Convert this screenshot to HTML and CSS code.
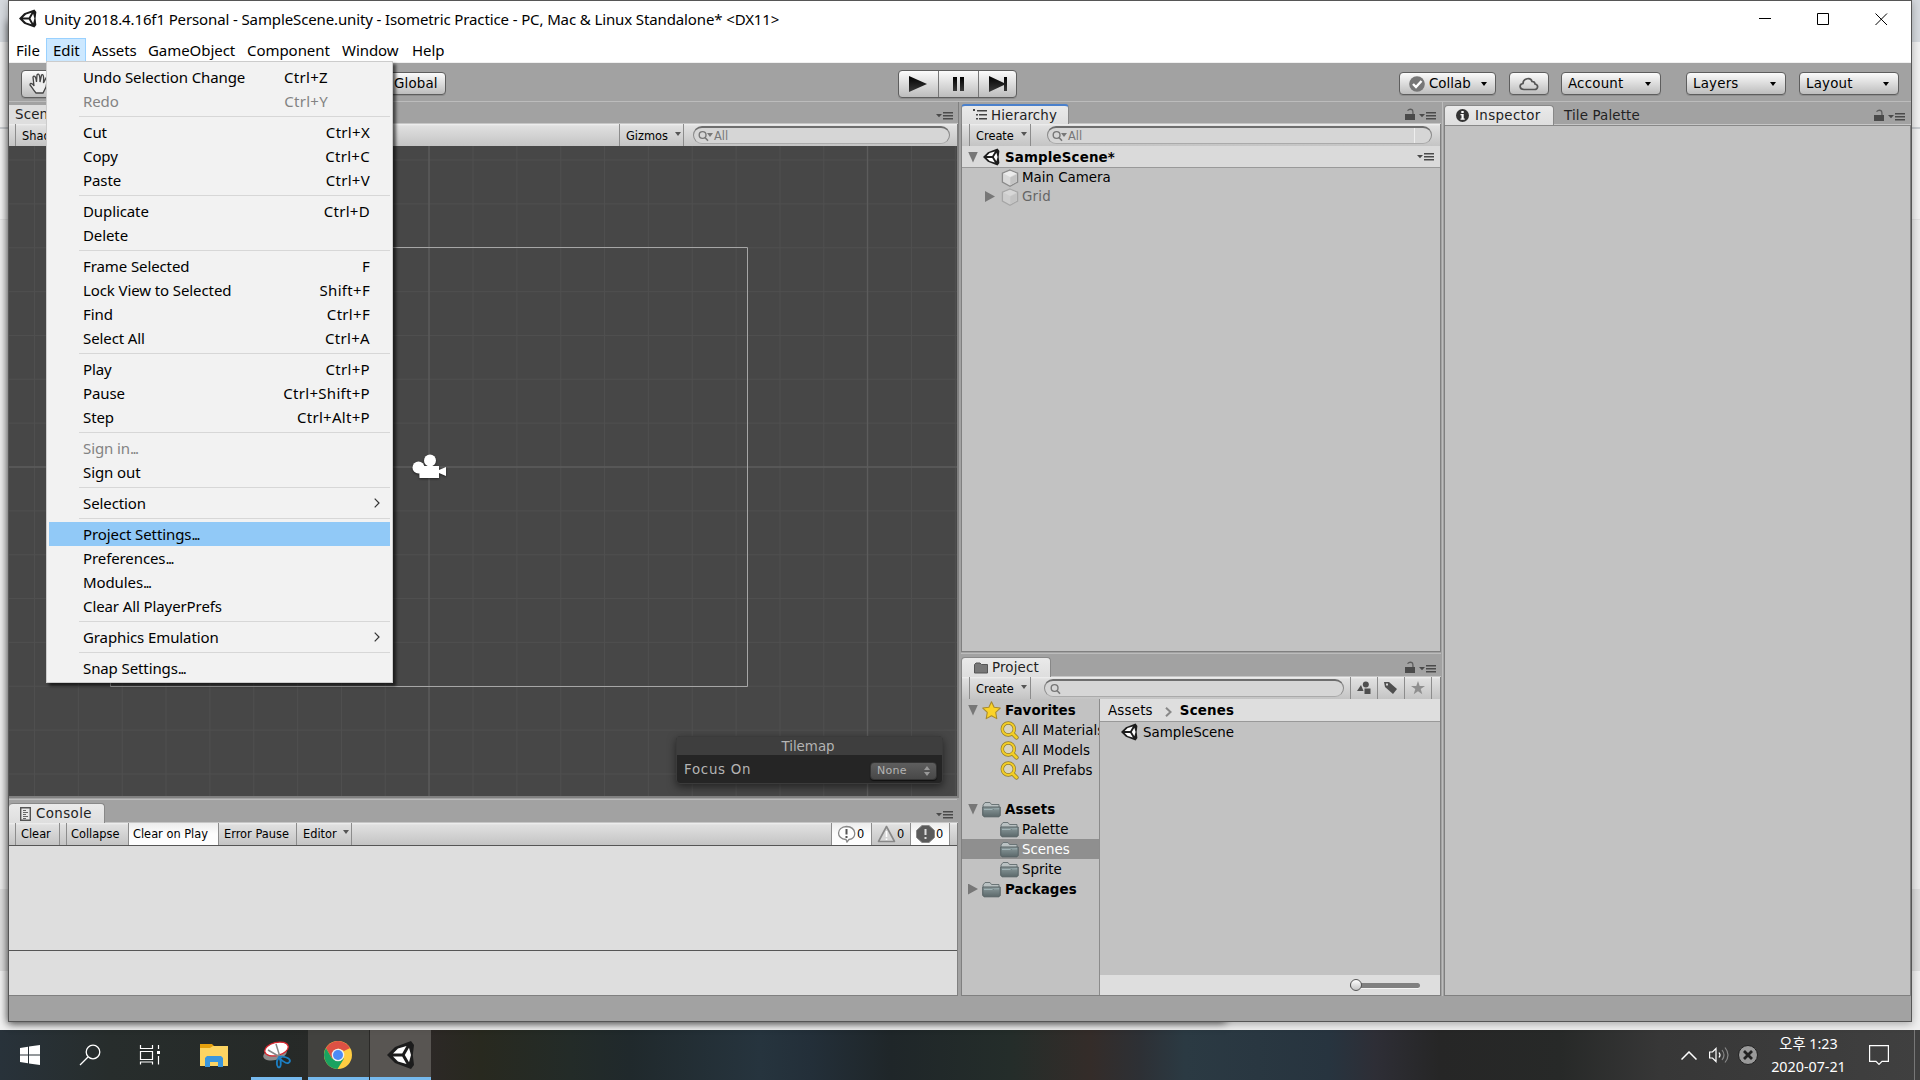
FILE: index.html
```
<!DOCTYPE html>
<html lang="ko">
<head>
	<meta charset="UTF-8">
	<title>Unity 2018.4.16f1 Personal</title>
	<link rel="stylesheet" href="styles.css">
</head>
<body>

	<!-- shared icons -->
	<svg class="defs">
		<symbol id="unity" viewBox="0 0 28 28">
			<path fill="#1c1c1c" d="M0 14 8 6 24 0 27 4 25.8 14 27 24 24 28 8 22Z"/>
			<path fill="#fff" d="M6 12.4 11 7.6 19.5 5 15.2 12.4ZM6 15.6 11 20.4 19.5 23 15.2 15.6ZM22 6.8 24 14 22 21.2 17.8 14Z"/>
		</symbol>
		<symbol id="cube" viewBox="0 0 18 18">
			<path fill="#d9d9d9" stroke="#8b8b8b" stroke-width="1.3" d="M9 1 16.6 4.2V13L9 17.2 1.4 13V4.2Z"/>
			<path fill="#ececec" d="M9 2 15.5 4.6 9 8 2.5 4.6Z"/>
			<path fill="#c4c4c4" d="M9.3 8.4 15.8 5.2V12.6L9.3 16.2Z"/>
		</symbol>
		<symbol id="folder" viewBox="0 0 19 17">
			<path fill="#b9c1c2" stroke="#6b7577" d="M1 14V4L3 1.5H8L9.5 3.5H17V14Z"/>
			<path fill="url(#fg)" stroke="#566264" d="M.8 6H18.2V14.5L17 15.8H2L.8 14.5Z"/>
			<path stroke="#9fb2b5" d="M2 8.5H10L11 7.8H17"/>
		</symbol>
		<symbol id="find" viewBox="0 0 19 19">
			<path stroke="#8e7a2a" stroke-width="4.2" stroke-linecap="round" d="M12.5 12.5 16.5 16.5"/>
			<circle cx="8.3" cy="8" r="6" fill="#d8d4c0" stroke="#8e7a2a" stroke-width="3.4"/>
			<circle cx="8.3" cy="8" r="6" fill="none" stroke="#f2cd27" stroke-width="2.1"/>
			<path stroke="#f2cd27" stroke-width="2.8" stroke-linecap="round" d="M12.5 12.5 16.5 16.5"/>
		</symbol>
		<symbol id="lens" viewBox="0 0 14 12">
			<circle cx="4.6" cy="5" r="3.4" fill="none" stroke="#777" stroke-width="1.4"/>
			<path stroke="#777" stroke-width="1.6" d="M7 7.5 10 10.8"/>
		</symbol>
		<symbol id="lock" viewBox="0 0 10 12">
			<path fill="#4a4a4a" d="M0 6H10V12H0Z"/>
			<path fill="none" stroke="#5c5c5c" stroke-width="1.3" d="M2.5 2.6Q5 .2 7.5 2 8 3 8 6"/>
		</symbol>
		<symbol id="opts" viewBox="0 0 17 8">
			<path fill="#4a4a4a" d="M0 2H6L3 5.2ZM7 0H17V1.4H7ZM7 3H17V4.4H7ZM7 6H17V7.4H7Z"/>
		</symbol>
		<linearGradient id="fg" x1="0" y1="0" x2="0" y2="1">
			<stop offset="0" stop-color="#8b9a9c"/><stop offset="1" stop-color="#5b686a"/>
		</linearGradient>
		<linearGradient id="ink" x1="0" y1="0" x2="0" y2="1">
			<stop offset="0" stop-color="#000"/><stop offset="1" stop-color="#3a3a3a"/>
		</linearGradient>
	</svg>

	<div class="desktop">
		<div class="behind"></div>
		<div class="window">

			<div class="titlebar">
				<svg class="title-icon"><use href="#unity"/></svg>
				<span class="title">Unity 2018.4.16f1 Personal - SampleScene.unity - Isometric Practice - PC, Mac &amp; Linux Standalone* &lt;DX11&gt;</span>
				<svg class="controls" viewBox="0 0 130 14" fill="none" stroke="#000">
					<path d="M0 6.5H12M58.500 1.500H69.500V12.500H58.500ZM116.500 1.500 128 13M128 1.500 116.500 13"/>
				</svg>
			</div>

			<div class="menubar">
				<span class="m-file">File</span><span class="open">Edit</span><span class="m-assets">Assets</span><span class="m-go">GameObject</span><span class="m-comp">Component</span><span class="m-win">Window</span><span>Help</span>
				<div class="menu">
					<div class="item">Undo Selection Change<kbd class="tight">Ctrl+Z</kbd></div>
					<div class="item off">Redo<kbd class="tight">Ctrl+Y</kbd></div>
					<hr>
					<div class="item">Cut<kbd>Ctrl+X</kbd></div>
					<div class="item">Copy<kbd>Ctrl+C</kbd></div>
					<div class="item">Paste<kbd>Ctrl+V</kbd></div>
					<hr>
					<div class="item">Duplicate<kbd>Ctrl+D</kbd></div>
					<div class="item">Delete</div>
					<hr>
					<div class="item">Frame Selected<kbd>F</kbd></div>
					<div class="item">Lock View to Selected<kbd>Shift+F</kbd></div>
					<div class="item">Find<kbd>Ctrl+F</kbd></div>
					<div class="item">Select All<kbd>Ctrl+A</kbd></div>
					<hr>
					<div class="item">Play<kbd>Ctrl+P</kbd></div>
					<div class="item">Pause<kbd>Ctrl+Shift+P</kbd></div>
					<div class="item">Step<kbd>Ctrl+Alt+P</kbd></div>
					<hr>
					<div class="item off"><span>Sign in<span class="dots">...</span></span></div>
					<div class="item">Sign out</div>
					<hr>
					<div class="item">Selection<svg class="sub" viewBox="0 0 6 10"><path d="M.7.7 5 5 .7 9.300"/></svg></div>
					<hr>
					<div class="item hot"><span>Project Settings<span class="dots">...</span></span></div>
					<div class="item"><span>Preferences<span class="dots">...</span></span></div>
					<div class="item"><span>Modules<span class="dots">...</span></span></div>
					<div class="item">Clear All PlayerPrefs</div>
					<hr>
					<div class="item">Graphics Emulation<svg class="sub" viewBox="0 0 6 10"><path d="M.7.7 5 5 .7 9.300"/></svg></div>
					<hr>
					<div class="item"><span>Snap Settings<span class="dots">...</span></span></div>
				</div>
			</div>

			<div class="toolbar">
				<div class="tools btn">
					<svg viewBox="0 0 20 22" fill="#eee" stroke="#444" stroke-width="1.300"><path d="M7 20C4 17 3 14 1 12 1 9 4 11 5 13L4 4C5 2 7 3 7.500 9L8 2C9.500 0 11 1 11 9L12.500 2C14 1 15 2 14.500 10L17 5C19 5 18 8 17 14L14 20Z"/></svg>
				</div>
				<div class="global btn">Global</div>
				<div class="play btn">
					<svg viewBox="0 0 39 26"><path fill="url(#ink)" d="M10 5 28 13 10 21Z"/></svg>
					<svg viewBox="0 0 39 26"><path fill="url(#ink)" d="M14 6H18V20H14ZM21 6H25V20H21Z"/></svg>
					<svg viewBox="0 0 39 26"><path fill="url(#ink)" d="M10 5 25 12V6H28V20H25V14L10 21Z"/></svg>
				</div>
				<div class="collab btn">
					<svg viewBox="0 0 16 16"><circle cx="8" cy="8" r="7.800" fill="#777"/><path fill="none" stroke="#fff" stroke-width="2.400" d="M4 8 7 11 12.500 5"/></svg>
					Collab<i></i>
				</div>
				<div class="cloud btn">
					<svg viewBox="0 0 20 14"><path fill="none" stroke="#555" stroke-width="1.700" d="M5 12.500C0 12.500 0 7 4 6.500 4 1 12 0 13 4.500 15 4.500 16 5.500 16 7 20 8 19 12.500 15.500 12.500Z"/></svg>
				</div>
				<div class="account btn">Account<i></i></div>
				<div class="layers btn">Layers<i></i></div>
				<div class="layout btn">Layout<i></i></div>
			</div>

			<div class="dock">
				<div class="col left">
					<div class="panel scene">
						<div class="tabs"><div class="tab scene-tab">Scene</div><svg class="opts"><use href="#opts"/></svg></div>
						<div class="strip">
							<span class="cell shaded">Shaded</span>
							<span class="cell gizmos">Gizmos<i></i></span>
							<div class="search"><svg><use href="#lens"/></svg><i></i>All</div>
						</div>
						<svg class="view" viewBox="9 146 948 650">
							<defs>
								<pattern id="grid" x="34" y="28" width="43.850" height="43.850" patternUnits="userSpaceOnUse">
									<path fill="none" stroke="#4f4f4f" d="M.5 0V43.850M0 .6H43.850"/>
								</pattern>
							</defs>
							<rect x="9" y="146" width="948" height="650" fill="url(#grid)"/>
							<path stroke="#5c5c5c" stroke-width="1.300" d="M429 146V796M867.500 146V796M9 467H957"/>
							<path fill="none" stroke="#a6a6a6" d="M110.500 247.500H747.500V686.500H110.500Z"/>
							<g class="cam" fill="#fff">
								<circle cx="418.500" cy="467.500" r="6"/><circle cx="430" cy="460.500" r="6"/>
								<path d="M419 466H439V470L446 467V476L439 473V478H419.500Z"/>
							</g>
						</svg>
						<div class="tilemap">
							<div class="tm-title">Tilemap</div>
							<div class="tm-body">Focus On<div class="tm-pop">None<svg viewBox="0 0 6 10"><path fill="#999" d="M0 4 3 0 6 4ZM0 6 3 10 6 6Z"/></svg></div></div>
						</div>
					</div>
					<div class="panel console">
						<div class="tabs">
							<div class="tab on console-tab"><svg viewBox="0 0 11 14"><path fill="#e8e8e8" stroke="#555" stroke-width="1.400" d="M.7.7H10.300V13.300H.7Z"/><path stroke="#666" d="M3 3.500H6M3 5.500H8M3 7.500H6M3 9.500H8M3 11.500H6"/></svg>Console</div>
							<svg class="opts"><use href="#opts"/></svg>
						</div>
						<div class="strip">
							<span class="cell clear">Clear</span><span class="cell collapse">Collapse</span><span class="cell cop on">Clear on Play</span><span class="cell ep">Error Pause</span><span class="cell editor">Editor<i></i></span>
							<span class="cell count on first"><svg viewBox="0 0 19 18"><path fill="#fff" stroke="#888" stroke-width="1.300" d="M9.500 1.500C20 2 20 14 12 14.500L10 17 9 14.500C-1 14-1 2 9.500 1.500Z"/><path stroke="#555" stroke-width="2" d="M9.500 4V9.500M9.500 11V13"/></svg>0</span>
							<span class="cell count warn"><svg viewBox="0 0 19 18"><path fill="#d6d6d6" stroke="#888" stroke-width="1.600" stroke-linejoin="round" d="M9.500 1.500 17.500 16.500H1.500Z"/><path stroke="#fff" stroke-width="1.600" d="M9.500 6V12M9.500 13.500V15"/></svg>0</span>
							<span class="cell count on"><svg viewBox="0 0 19 18"><path fill="#5a5a5a" stroke="#888" d="M6 .5H13L18.500 5.500V12.500L13 17.500H6L.5 12.500V5.500Z"/><path stroke="#ddd" stroke-width="2" d="M9.500 4V10M9.500 12V14"/></svg>0</span>
							<span class="cell end"></span>
						</div>
						<div class="log"></div>
						<div class="detail"></div>
					</div>
				</div>

				<div class="col mid">
					<div class="panel hierarchy">
						<div class="tabs">
							<div class="tab on focus"><svg viewBox="0 0 14 12"><path fill="#444" d="M0 0H2V2H0ZM4 1H14V2.500H4ZM3 5H5V6.500H3ZM6 5H14V6.500H6ZM3 9H5V10.500H3ZM6 9H14V10.500H6Z"/></svg>Hierarchy</div>
							<svg class="lock"><use href="#lock"/></svg><svg class="opts"><use href="#opts"/></svg>
						</div>
						<div class="strip">
							<span class="cell create">Create<i></i></span>
							<div class="search split"><svg><use href="#lens"/></svg><i></i>All</div>
						</div>
						<div class="scene-row"><b class="fold down"></b><svg class="u"><use href="#unity"/></svg><b>SampleScene*</b><svg class="opts"><use href="#opts"/></svg></div>
						<div class="row go"><svg class="cube"><use href="#cube"/></svg>Main Camera</div>
						<div class="row go dim"><b class="fold"></b><svg class="cube"><use href="#cube"/></svg>Grid</div>
					</div>
					<div class="panel project">
						<div class="tabs">
							<div class="tab on project-tab"><svg viewBox="0 0 14 12"><path fill="#777" stroke="#555" d="M.5 11V2.500L2 1H6L7.500 2.500H13.500V11Z"/></svg>Project</div>
							<svg class="lock"><use href="#lock"/></svg><svg class="opts"><use href="#opts"/></svg>
						</div>
						<div class="strip">
							<span class="cell create">Create<i></i></span>
							<div class="search"><svg><use href="#lens"/></svg></div>
							<span class="cell ico"><svg viewBox="0 0 14 14"><path fill="#4f4f4f" d="M0 10 4 4 6.500 10ZM7.500 7.500H13.500V13H7.500Z"/><circle cx="8.800" cy="3.500" r="3" fill="#4f4f4f"/></svg></span>
							<span class="cell ico"><svg viewBox="0 0 14 14"><path fill="#4f4f4f" fill-rule="evenodd" d="M0 1H5L13 8 9 13 1 6ZM2 2.500V4.500H4V2.500Z"/></svg></span>
							<span class="cell ico"><svg viewBox="0 0 14 14"><path fill="#8f8f8f" d="M7 0 8.700 4.900H14L9.700 8 11.300 13.200 7 10.200 2.700 13.200 4.300 8 0 4.900H5.300Z"/></svg></span>
							<span class="cell end"></span>
						</div>
						<div class="split-view">
							<div class="tree">
								<div class="row root"><b class="fold down"></b><svg class="star" viewBox="0 0 18 18"><path fill="#fbd327" stroke="#a88a2c" stroke-linejoin="round" d="M9 .8 11.500 6 17.300 6.700 13 10.800 14 16.700 9 14 4 16.700 5 10.800 .7 6.700 6.500 6Z"/></svg><b>Favorites</b></div>
								<div class="row leaf"><svg class="find"><use href="#find"/></svg>All Materials</div>
								<div class="row leaf"><svg class="find"><use href="#find"/></svg>All Models</div>
								<div class="row leaf"><svg class="find"><use href="#find"/></svg>All Prefabs</div>
								<div class="row gap"></div>
								<div class="row root"><b class="fold down"></b><svg><use href="#folder"/></svg><b>Assets</b></div>
								<div class="row leaf"><svg><use href="#folder"/></svg>Palette</div>
								<div class="row leaf sel"><svg><use href="#folder"/></svg>Scenes</div>
								<div class="row leaf"><svg><use href="#folder"/></svg>Sprite</div>
								<div class="row root"><b class="fold"></b><svg><use href="#folder"/></svg><b>Packages</b></div>
							</div>
							<div class="files">
								<div class="crumbs">Assets<svg viewBox="0 0 7 10"><path fill="none" stroke="#888" stroke-width="2" d="M1 .8 5.500 5 1 9.200"/></svg><b>Scenes</b></div>
								<div class="file"><svg class="u"><use href="#unity"/></svg>SampleScene</div>
								<div class="zoombar"><div class="track"><div class="knob"></div></div></div>
							</div>
						</div>
					</div>
				</div>

				<div class="col right">
					<div class="panel inspector">
						<div class="tabs">
							<div class="tab on insp-tab"><svg viewBox="0 0 13 13"><circle cx="6.500" cy="6.500" r="6.500" fill="#333"/><path fill="#fff" d="M5.300 2H7.700V4H5.300ZM4.500 5H7.700V9.500H8.700V10.800H4.500V9.500H5.500V6.200H4.500Z"/></svg>Inspector</div>
							<div class="tab palette-tab">Tile Palette</div>
							<svg class="lock"><use href="#lock"/></svg><svg class="opts"><use href="#opts"/></svg>
						</div>
						<div class="empty"></div>
					</div>
				</div>
			</div>
		</div>
	</div>

	<div class="taskbar">
		<div class="task"><svg viewBox="0 0 28 28"><path fill="#fff" d="M4 7 12 5.800V13.500H4ZM13 5.600 24 4V13.500H13ZM4 14.500H12V22.200L4 21ZM13 14.500H24V24L13 22.400Z"/></svg></div>
		<div class="task"><svg viewBox="0 0 28 28" fill="none" stroke="#fff" stroke-width="1.300"><circle cx="17" cy="11" r="6.800"/><path d="M12 16 4 24"/></svg></div>
		<div class="task"><svg viewBox="0 0 28 28" fill="none" stroke="#fff" stroke-width="1.200"><path d="M4.500 4V7.500H16.500V4M4.500 10.500H16.500V18.500H4.500ZM4.500 23.500V21H16.500V23.500M22.500 4V8M22.500 15V23.500"/><path fill="#fff" stroke="none" d="M21 10H24V13H21Z"/></svg></div>
		<div class="task"><svg viewBox="0 0 28 28"><path fill="#e5a00d" d="M0 3H12L14 5V9H0Z"/><path fill="#fcd462" d="M0 7H10L13 5H28V25H0Z"/><path fill="#3a96dd" d="M5 26V17L7 15H21L23 17V26H18V21H10V26Z"/></svg></div>
		<div class="task run"><svg viewBox="0 0 28 28"><ellipse cx="12" cy="13" rx="12" ry="6" fill="#8d8d8d" transform="rotate(-14 12 13)"/><ellipse cx="13.500" cy="8" rx="12" ry="6.500" fill="#fff" stroke="#d9272e" stroke-width="1.300" transform="rotate(-14 13.500 8)"/><path stroke="#888" stroke-width="1.500" d="M13 3 17 16M5 9 17 16"/><path fill="none" stroke="#1c7fc4" stroke-width="1.800" d="M16 16C14 19 13 23 15 26 18 28 19 21 16 16 20 22 26 24 27 20 27 17 21 15 16 16Z"/></svg></div>
		<div class="task run chrome"><svg viewBox="0 0 28 28"><circle cx="14" cy="14" r="14" fill="#ffcd42"/><path fill="#dd5144" d="M1.900 7A14 14 0 0 1 26.100 7L14 7.500 8 17.500Z"/><path fill="#1aa260" d="M1.900 7A14 14 0 0 0 13.500 28L20 17.500 8 17.500Z"/><path fill="#dd5144" d="M14 7H26.100L20 10Z"/><circle cx="14" cy="14" r="6.300" fill="#f1f1f1"/><circle cx="14" cy="14" r="5" fill="#4c8bf5"/></svg></div>
		<div class="task run active"><svg viewBox="0 0 28 28"><use href="#unity"/></svg></div>
		<div class="tray">
			<svg class="chev" viewBox="0 0 16 9" fill="none" stroke="#fff" stroke-width="1.500"><path d="M.5 8.500 8 1 15.500 8.500"/></svg>
			<svg class="spk" viewBox="0 0 21 18" fill="none" stroke="#fff" stroke-width="1.200"><path d="M.6 6H3.500L7 2.500V15.500L3.500 12H.6ZM10 6.500Q12 9 10 11.500"/><path stroke="#888" d="M13 4Q17 9 13 14M16 1.500Q22 9 16 16.500"/></svg>
			<svg class="x" viewBox="0 0 20 20"><circle cx="10" cy="10" r="9.500" fill="#9a9a9a" stroke="#222"/><path stroke="#222" stroke-width="2.800" d="M6 6 14 14M14 6 6 14"/></svg>
			<div class="clock"><span>오후 1:23</span><span>2020-07-21</span></div>
			<svg class="note" viewBox="0 0 20 20" fill="none" stroke="#fff" stroke-width="1.200"><path d="M.6.6H19.400V16.400H13L10 19.400 7 16.400H.6Z"/></svg>
		</div>
	</div>

</body>
</html>
```
FILE: styles.css
```
* { box-sizing: border-box; }
body {
	margin: 0;
	width: 1920px;
	height: 1080px;
	overflow: hidden;
	font-family: "DejaVu Sans", sans-serif;
	font-size: 13.4px;
	color: #000;
}
svg { display: block; flex: none; }
.defs { position: absolute; width: 0; height: 0; }

.desktop {
	position: relative;
	height: 1030px;
	padding: 0 8px;
	background: linear-gradient(#d5d9de 42px, #f1f1f1 42px, #f1f1f1 127px, #c9ccd0 127px, #c9ccd0 129px, #f1f1f1 129px, #f1f1f1 219px, #d8d8d8 219px, #ebebeb 220px, #ebebeb 889px, #dcdcdc 889px, #dcdcdc 971px, #f0f0f0 971px);
}
/* second window whose shadow shows under the editor */
.behind {
	position: absolute;
	left: 8px;
	top: 20px;
	width: 1218px;
	height: 1002px;
	box-shadow: 0 1px 8px rgba(0,0,0,.6);
}
.window {
	position: relative;
	display: flex;
	flex-direction: column;
	width: 1904px;
	height: 1022px;
	border: 1px solid #565656;
	background: #a2a2a2;
	box-shadow: 0 2px 8px rgba(0,0,0,.3);
}

.titlebar {
	display: flex;
	align-items: center;
	height: 37px;
	padding: 0 22px 2px 10px;
	background: #fff;
}
.title-icon { width: 18px; height: 19px; }
.title, .menubar {
	font-family: "Noto Sans", "Noto Sans CJK KR", sans-serif;
	font-size: 15px;
}
.title { flex: 1; margin-left: 7px; white-space: pre; letter-spacing: -.12px; }
.controls { width: 130px; height: 14px; }

.menubar {
	position: relative;
	display: flex;
	height: 25px;
	background: #fff;
	border-bottom: 1px solid #f0f0f0;
	line-height: 25px;
	letter-spacing: -.05px;
}
.menubar > span { width: 69px; padding-left: 7px; }
.menubar > .m-file { width: 37px; }
.menubar > .open {
	width: 40px;
	padding-left: 6px;
	background: #cce8ff;
	border: 1px solid #99d1ff;
	line-height: 22px;
}
.menubar > .m-assets { width: 55px; padding-left: 6px; }
.menubar > .m-go { width: 99px; }
.menubar > .m-comp { width: 96px; }
.menubar > .m-win { padding-left: 6px; }

.menu {
	position: absolute;
	z-index: 5;
	left: 37px;
	top: 23px;
	width: 347px;
	padding: 3px 2px 2px;
	background: #f2f2f2;
	border: 1px solid #ccc;
	box-shadow: 3px 3px 3px rgba(0,0,0,.6);
}
.item {
	display: flex;
	align-items: center;
	justify-content: space-between;
	height: 24px;
	padding: 0 20px 0 34px;
	line-height: 24px;
	letter-spacing: -.1px;
}
.item kbd { font: inherit; letter-spacing: .3px; }
.item kbd.tight { margin-right: 42px; }
.dots { letter-spacing: -1.5px; }
.off { color: #838383; }
.hot { background: #91c9f7; }
.menu hr {
	height: 1px;
	margin: 3px 0 3px 30px;
	border: 0;
	background: #d7d7d7;
}
.sub { width: 6px; height: 10px; margin-right: -10px; fill: none; stroke: #333; stroke-width: 1.2; }

.toolbar {
	display: flex;
	align-items: center;
	height: 39px;
	padding: 3px 12px 0;
	border-bottom: 1px solid #bcbcbc;
	line-height: 20px;
}
.btn {
	display: flex;
	align-items: center;
	height: 23px;
	padding: 0 6px;
	border: 1px solid #5e5e5e;
	border-radius: 4px;
	background: linear-gradient(#fbfbfb, #bdbdbd);
	box-shadow: 0 1px 0 rgba(0,0,0,.12);
}
.btn i {
	margin-left: auto;
	margin-right: 3px;
	border: 3.5px solid transparent;
	border-top: 4px solid #000;
	border-bottom: 0;
}
.tools { width: 160px; height: 28px; padding-left: 7px; }
.tools svg { width: 20px; height: 22px; }
.global { width: 66px; margin-left: 199px; padding-left: 13px; letter-spacing: .15px; }
.play { width: 119px; height: 28px; margin-left: 452px; padding: 0; }
.play svg { width: 39px; height: 26px; }
.play svg + svg { width: 40px; border-left: 1px solid #777; }
.collab { width: 97px; margin-left: 382px; padding-left: 9px; padding-right: 5px; }
.collab svg { width: 16px; height: 16px; margin-right: 4px; }
.cloud { width: 40px; margin-left: 13px; padding-left: 9px; }
.cloud svg { width: 20px; height: 14px; }
.account { width: 100px; margin-left: 12px; letter-spacing: .2px; }
.layers { width: 100px; margin-left: 25px; letter-spacing: .2px; }
.layout { width: 100px; margin-left: 13px; letter-spacing: .2px; }

.dock { display: flex; height: 894px; }
.col { display: flex; flex-direction: column; }
.left { width: 951px; }
.mid { width: 482px; padding: 0 1px 0 1px; }
.right { flex: 1; padding: 0 0 0 1px; border-left: 1px solid #bcbcbc; }
.panel {
	display: flex;
	flex-direction: column;
	border: 0 solid #808080;
	border-width: 0 1px 1px;
	background: #c2c2c2;
}
.tabs {
	display: flex;
	align-items: flex-end;
	height: 22px;
	padding-right: 5px;
	background: #a2a2a2;
	border-bottom: 1px solid #c6c6c6;
	margin-left: -1px;
	margin-right: -1px;
}
.tab {
	display: flex;
	align-items: center;
	height: 19px;
	margin-bottom: -1px;
	line-height: 19px;
	letter-spacing: .15px;
	color: #222;
}
.tab.on {
	height: 20px;
	border: 1px solid #888;
	border-bottom: 0;
	border-radius: 4px 4px 0 0;
	background: linear-gradient(#eaeaea, #dedede);
}
.tab.focus { border-top: 2px solid #4a80cc; }
.opts { width: 17px; height: 8px; }
.tabs .opts { margin-bottom: 3px; }
.tabs > .lock { width: 10px; height: 12px; margin: 0 4px 3px auto; }
.strip {
	display: flex;
	align-items: stretch;
	height: 22px;
	padding-left: 6px;
	background: linear-gradient(#f0f0f0 0, #e0e0e0 2px, #c4c4c4);
	font-size: 11.4px;
	line-height: 22px;
}
.cell { display: flex; align-items: center; padding-top: 1px; padding-left: 6px; border-left: 1px solid #8c8c8c; }
.cell i {
	margin: -4px 0 0 7px;
	border: 3px solid transparent;
	border-top: 4px solid #555;
	border-bottom: 0;
}
.cell.on { background: linear-gradient(#ececec, #fdfdfd 50%); }
.search {
	display: flex;
	align-items: center;
	height: 18px;
	margin-top: 2px;
	padding-left: 4px;
	border: 1px solid #8a8a8a;
	border-top: 2px solid #6e6e6e;
	border-bottom-color: #aaa;
	border-radius: 9px;
	background: #d6d6d6;
	color: #777;
	line-height: 14px;
}
.search svg { width: 14px; height: 12px; }
.search i { margin: -2px 1px 0 -5px; border: 3px solid transparent; border-top: 4px solid #777; border-bottom: 0; }

/* scene */
.scene { position: relative; height: 696px; margin-right: 1px; border-left: 0; border-bottom-width: 2px; border-right-width: 2px; }
.scene .tabs, .console .tabs { margin-left: 0; }
.scene .opts, .console .opts { margin-left: auto; }
.scene-tab { width: 90px; padding-left: 6px; background: #dedede; }
.shaded { width: 604px; }
.gizmos { width: 65px; border-right: 1px solid #8c8c8c; }
.scene .search { width: 257px; margin-left: 9px; }
.view { width: 948px; height: 650px; background: #474747; }
.cam { filter: drop-shadow(0 1px 1px rgba(0,0,0,.5)); }
.tilemap {
	position: absolute;
	left: 667px;
	top: 634px;
	width: 267px;
	height: 48px;
	border: 1px solid #3b3b3b;
	border-radius: 4px;
	background: #252525;
	color: #b4b4b4;
	box-shadow: 0 3px 8px rgba(0,0,0,.5);
}
.tm-title { height: 18px; padding-right: 3px; background: #3e3e3e; line-height: 19px; text-align: center; }
.tm-body { display: flex; align-items: center; justify-content: space-between; height: 28px; padding: 0 5px 0 7px; letter-spacing: .7px; }
.tm-pop {
	display: flex;
	align-items: center;
	justify-content: space-between;
	width: 67px;
	height: 18px;
	margin-top: 3px;
	padding: 0 6px;
	border: 1px solid #333;
	border-radius: 4px;
	background: linear-gradient(#5e5e5e, #484848);
	box-shadow: 0 1px 1px #111;
	font-size: 11px;
	letter-spacing: .3px;
}
.tm-pop svg { width: 6px; height: 10px; }

/* console */
.console { height: 197px; margin: 1px 2px 0 0; border-left: 0; border-top: 1px solid #bcbcbc; }
.console .tabs { height: 23px; }
.console .cell { padding-top: 0; }
.console-tab { width: 96px; border-left: 0 !important; padding-left: 11px; letter-spacing: .4px; }
.console-tab svg { width: 11px; height: 14px; margin-right: 5px; }
.clear { width: 45px; padding-left: 5px; border-right: 1px solid #8c8c8c; }
.collapse { width: 62px; margin-left: 6px; padding-left: 4px; }
.cop { width: 90px; padding-left: 4px; }
.ep { width: 78px; padding-left: 5px; }
.editor { width: 56px; border-right: 1px solid #8c8c8c; }
.editor i { margin-left: 6px; }
.count { width: 39px; padding-left: 5px; }
.count svg { width: 19px; height: 18px; margin-right: 1px; }
.first { width: 40px; margin-left: auto; }
.warn svg { margin-right: 1px; }
.end { width: 8px; padding: 0; }
.log { height: 106px; background: #dedede; border-top: 1px solid #555; border-bottom: 1px solid #555; }
.detail { flex: 1; background: #dedede; }

/* hierarchy */
.hierarchy { height: 550px; }
.hierarchy .tab { width: 108px; padding-left: 11px; }
.mid .tab svg { width: 14px; height: 12px; margin-right: 4px; }
.create { width: 62px; border-right: 1px solid #8c8c8c; }
.mid .strip { padding-left: 7px; }
.hierarchy .search { position: relative; width: 385px; margin-left: 16px; }
.split::after { content: ""; position: absolute; right: 16px; top: 0; height: 15px; border-left: 1px solid #eee; }
.scene-row {
	display: flex;
	align-items: center;
	height: 22px;
	padding: 1px 6px 0 6px;
	background: #dadada;
	border-bottom: 1px solid #999;
	letter-spacing: .15px;
}
.scene-row .opts { margin-left: auto; }
.u { width: 17px; height: 18px; margin: 0 5px; }
.fold {
	width: 10px;
	height: 11px;
	background: #777;
	clip-path: polygon(0 0, 100% 50%, 0 100%);
}
.fold.down { clip-path: polygon(0 0, 100% 0, 50% 100%); }
.row { display: flex; align-items: center; height: 20px; white-space: nowrap; }
.go { height: 19px; padding-left: 39px; }
.go .cube { width: 18px; height: 18px; margin-right: 3px; }
.go.dim { padding-left: 23px; color: #666; letter-spacing: .2px; }
.dim .fold { margin-right: 6px; }
.dim .cube { opacity: .5; }

/* project */
.project { height: 343px; margin-top: 1px; }
.project .tabs { height: 24px; border-top: 1px solid #bcbcbc; }
.project-tab { width: 90px; padding-left: 12px; }
.project .search { width: 300px; margin: 2px 6px 0 13px; padding-left: 5px; }
.ico { width: 27px; padding: 0 0 0 6px; }
.ico svg { width: 14px; height: 14px; }
.split-view { display: flex; flex: 1; min-height: 0; }
.tree { width: 138px; overflow: hidden; border-right: 1px solid #8c8c8c; padding-top: 1px; }
.root { padding-left: 6px; letter-spacing: .1px; }
.root svg { width: 19px; height: 17px; margin: 0 4px 0 4px; }
.leaf { padding-left: 38px; }
.leaf svg { width: 19px; height: 17px; margin-right: 3px; }
.root .star, .leaf .find { height: 19px; }
.sel { background: #8f8f8f; color: #fff; }
.gap { height: 19px; }
.files { display: flex; flex-direction: column; flex: 1; }
.crumbs { display: flex; align-items: center; height: 23px; padding-left: 8px; background: #dedede; border-bottom: 1px solid #999; letter-spacing: .2px; }
.crumbs svg { width: 7px; height: 10px; margin: 3px 8px 0 12px; }
.file { display: flex; align-items: center; height: 20px; padding-left: 16px; }
.zoombar { display: flex; align-items: center; justify-content: flex-end; height: 20px; margin-top: auto; padding-right: 20px; background: #dedede; }
.track { width: 70px; height: 5px; border-radius: 3px; background: #808080; box-shadow: 0 1px 0 #f4f4f4; }
.knob { width: 12px; height: 12px; margin-top: -4px; border: 1px solid #555; border-radius: 50%; background: linear-gradient(#fff, #c4c4c4); }

/* inspector */
.inspector { height: 894px; }
.inspector .tabs { height: 23px; padding-right: 6px; }
.insp-tab { width: 110px; padding-left: 11px; letter-spacing: .35px; }
.insp-tab svg { width: 13px; height: 13px; margin-right: 6px; }
.palette-tab { margin-left: 10px; }
.empty { border-top: 1px solid #888; }

/* taskbar */
.taskbar {
	display: flex;
	height: 50px;
	background: linear-gradient(90deg, #28323a 0, #272d2c 110px, #262a28 280px, #2c2826 430px, #28291f 480px, #232b28 570px, #20292c 630px, #26343e 760px, #232f39 810px, #1f2629 890px, #242d2a 1010px, #342c29 1090px, #2d3035 1140px, #2b3a43 1185px, #27343f 1330px, #2e2e36 1375px, #262626 1440px, #272928 1560px, #373737 1660px, #404040 1920px);
}
.task { display: flex; align-items: center; justify-content: center; width: 50px; height: 50px; margin-right: -1px; }
.task:first-child { margin-left: 5px; }
.task svg { width: 28px; height: 28px; }
.task.run { width: 51px; border-bottom: 3px solid #76b9ed; padding-top: 3px; margin-left: 0; margin-right: 6px; }
.task.run.chrome, .task.run.active { width: 61px; margin-right: 1px; }
.task.chrome { background: #42423f; }
.task.active { background: #585552; }
.task.chrome svg { margin-left: -1px; }
.task:nth-child(2), .task:nth-child(3) { margin-left: 11px; }
.task:nth-child(4) { margin-left: 15px; }
.task:nth-child(5) { margin-left: 13px; }
.tray {
	display: flex;
	align-items: center;
	margin: 0 5px 0 auto;
	padding-right: 25px;
	border-right: 1px solid #777;
	color: #fff;
}
.chev { width: 16px; height: 9px; }
.spk { width: 21px; height: 18px; margin-left: 12px; }
.x { width: 20px; height: 20px; margin-left: 8px; }
.clock {
	display: flex;
	flex-direction: column;
	align-items: center;
	width: 77px;
	margin: 0 22px 0 12px;
	font-family: "Noto Sans", "Noto Sans CJK KR", sans-serif;
	font-size: 14.3px;
	line-height: 23px;
}
.note { width: 20px; height: 20px; }
```
